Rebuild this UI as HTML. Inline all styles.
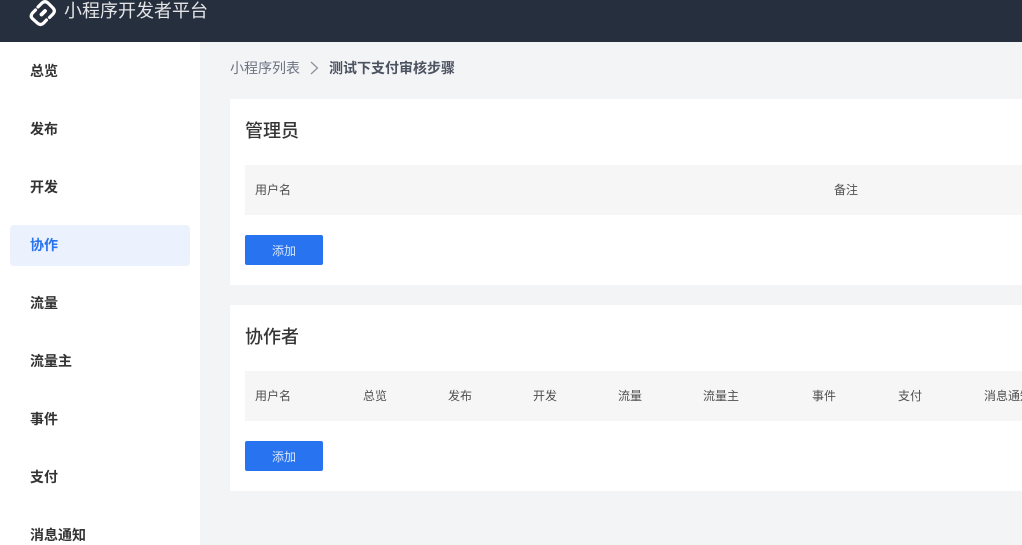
<!DOCTYPE html>
<html lang="zh"><head><meta charset="utf-8"><style>
*{margin:0;padding:0;box-sizing:border-box}
html,body{width:1022px;height:545px;overflow:hidden;background:#f3f4f6;font-family:"Liberation Sans","Noto Sans CJK SC",sans-serif}
.a{position:absolute;white-space:nowrap}
.hd{left:0;top:0;width:1022px;height:42px;background:#262f3e}
.side{left:0;top:42px;width:200px;height:503px;background:#fff}
.nav{left:30px;font-size:14px;font-weight:700;line-height:20px;color:#333}
.card{left:230px;width:792px;background:#fff}
.h{left:245px;font-size:18px;font-weight:500;line-height:26px;color:#353535}
.th{left:245px;width:777px;height:50px;background:#f6f6f6}
.c{font-size:12px;line-height:18px;color:#4f4f4f}
.btn{left:245px;width:78px;height:30px;background:#2873f0;border-radius:2px;color:#d9e6fc;font-size:12px;line-height:32px;text-align:center}
</style></head><body>
<div class="a hd"></div>
<svg class="a" style="left:28px;top:-2px" width="30" height="30" viewBox="0 0 30 30" fill="none" stroke="#fff" stroke-width="3.2" stroke-linecap="round" stroke-linejoin="round">
<path d="M10 9 14 5 C16 3.200 18 3.200 20 5 L25 10 C26.800 12 26.800 14 25 16 L21.500 19.500"/>
<path d="M7.500 12 4.500 15 C2.800 17 2.800 19 4.500 20.700 L9.500 25.200 C11.500 27 13.500 27 15.500 25.200 L18.500 22"/>
<path d="M13.500 16.500 17 13" stroke-width="3.800"/>
</svg>
<div class="a" style="left:64px;top:-2px;font-size:18px;line-height:26px;color:#e4e5e7">小程序开发者平台</div>
<div class="a side"></div>
<div class="a" style="left:10px;top:225px;width:180px;height:41px;background:#ebf1fd;border-radius:4px"></div>
<div class="a nav" style="top:61px">总览</div>
<div class="a nav" style="top:119px">发布</div>
<div class="a nav" style="top:177px">开发</div>
<div class="a nav" style="top:235px;color:#2873f0">协作</div>
<div class="a nav" style="top:293px">流量</div>
<div class="a nav" style="top:351px">流量主</div>
<div class="a nav" style="top:409px">事件</div>
<div class="a nav" style="top:467px">支付</div>
<div class="a nav" style="top:525px">消息通知</div>
<div class="a" style="left:230px;top:58px;font-size:14px;line-height:20px;color:#6b7280">小程序列表</div>
<svg class="a" style="left:308px;top:60px" width="14" height="16" viewBox="0 0 14 16" fill="none" stroke="#8a8f98" stroke-width="1.200"><path d="M3 2 9.500 8 3 14"/></svg>
<div class="a" style="left:329px;top:58px;font-size:14px;font-weight:700;line-height:20px;color:#4b5260">测试下支付审核步骤</div>
<div class="a card" style="top:99px;height:186px"></div>
<div class="a h" style="top:118px">管理员</div>
<div class="a th" style="top:165px"></div>
<div class="a c" style="left:255px;top:181px">用户名</div>
<div class="a c" style="left:834px;top:181px">备注</div>
<div class="a btn" style="top:235px">添加</div>
<div class="a card" style="top:305px;height:186px"></div>
<div class="a h" style="top:324px">协作者</div>
<div class="a th" style="top:371px"></div>
<div class="a c" style="left:255px;top:387px">用户名</div>
<div class="a c" style="left:363px;top:387px">总览</div>
<div class="a c" style="left:448px;top:387px">发布</div>
<div class="a c" style="left:533px;top:387px">开发</div>
<div class="a c" style="left:618px;top:387px">流量</div>
<div class="a c" style="left:703px;top:387px">流量主</div>
<div class="a c" style="left:812px;top:387px">事件</div>
<div class="a c" style="left:898px;top:387px">支付</div>
<div class="a c" style="left:984px;top:387px">消息通知</div>
<div class="a btn" style="top:441px">添加</div>
</body></html>
